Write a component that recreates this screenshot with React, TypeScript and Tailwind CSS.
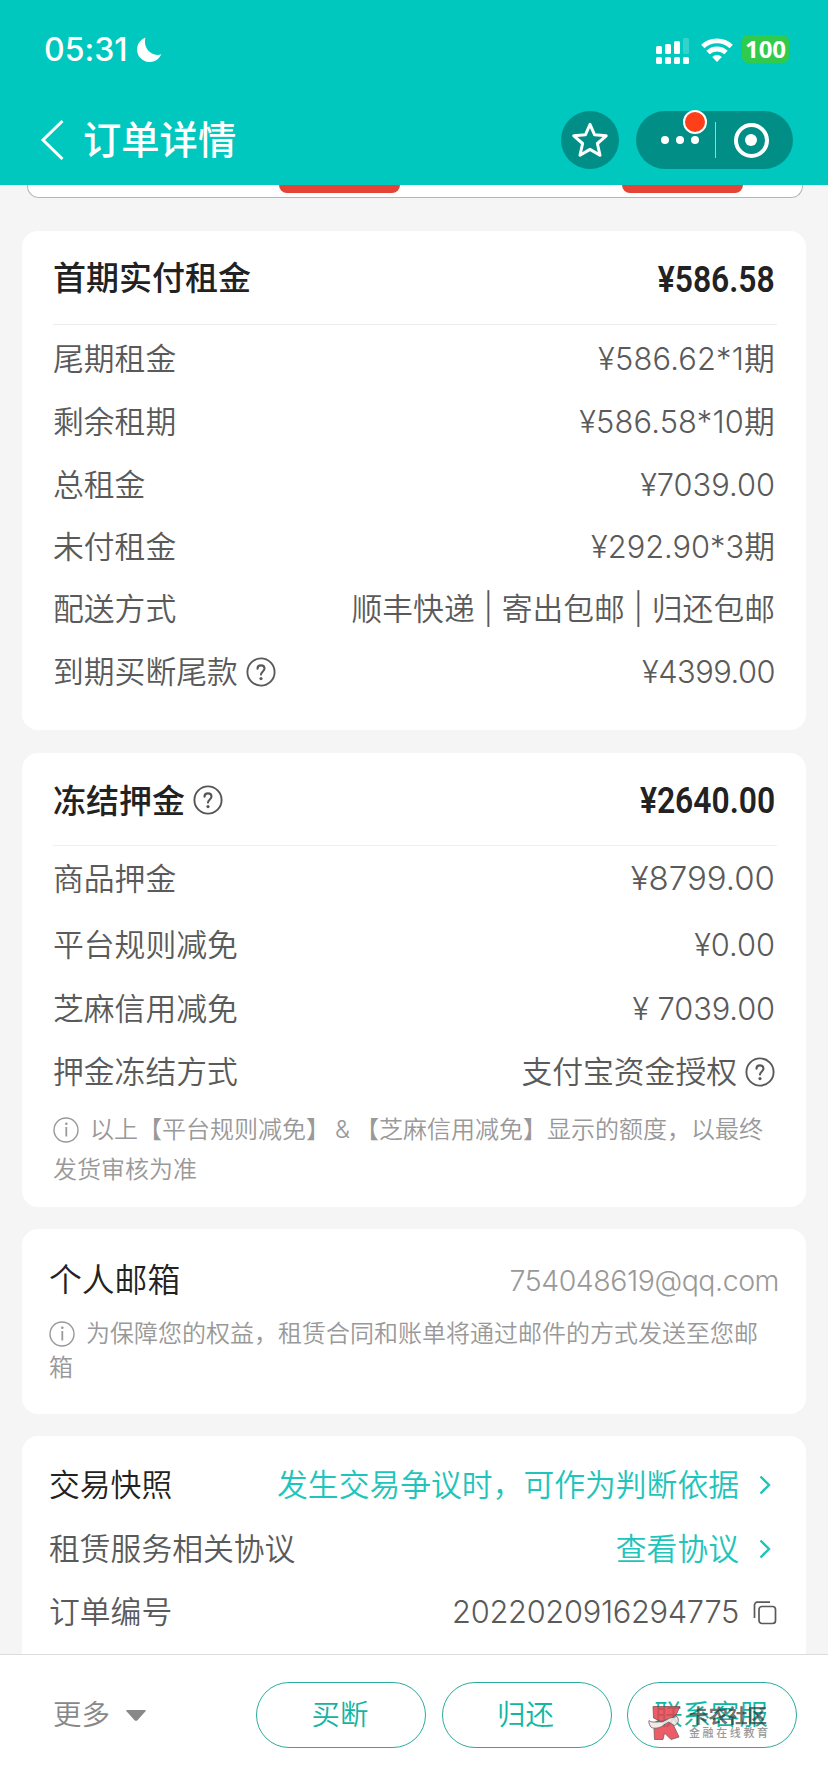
import React from 'react';
import clsx from 'clsx';

interface RowProps {
  label: React.ReactNode;
  value: React.ReactNode;
  className?: string;
  labelClassName?: string;
  valueClassName?: string;
}

function QuestionIcon({ className }: { className?: string }) {
  return (
    <svg viewBox="0 0 30 30" className={clsx('h-[30px] w-[30px] shrink-0', className)} fill="none" stroke="currentColor">
      <circle cx="15" cy="15" r="13.6" strokeWidth="1.9" />
      <path d="M11.5 11.8c0-2 1.400-3.400 3.500-3.400s3.500 1.300 3.500 3.200c0 2.700-3.500 3-3.500 6" strokeWidth="2.100" strokeLinecap="round" />
      <circle cx="15" cy="21.6" r="1.600" fill="currentColor" stroke="none" />
    </svg>
  );
}

function InfoIcon() {
  return (
    <svg viewBox="0 0 26 26" className="mr-[11px] inline-block h-[26px] w-[26px] align-[-5px]" fill="none" stroke="currentColor">
      <circle cx="13" cy="13" r="12" strokeWidth="1.400" />
      <path d="M13.300 10v9.500" strokeWidth="1.8" />
      <circle cx="13.300" cy="6.800" r="1.300" fill="currentColor" stroke="none" />
    </svg>
  );
}

function ArrowIcon() {
  return (
    <svg viewBox="0 0 12 20" className="mr-[5px] ml-[20px] h-[20px] w-[12px]" fill="none" stroke="currentColor" strokeWidth="2.400">
      <path d="M1.5 1.5 10 10l-8.500 8.500" />
    </svg>
  );
}

function CopyIcon() {
  return (
    <svg viewBox="0 0 24 24" className="ml-[14px] h-[24px] w-[24px]" fill="none" stroke="currentColor" strokeWidth="1.700">
      <rect x="6" y="5.500" width="16.500" height="17" rx="3" />
      <path d="M1.500 17V4a2.800 2.800 0 0 1 2.800-2.800H17" />
    </svg>
  );
}

function Row({ label, value, className, labelClassName, valueClassName }: RowProps) {
  return (
    <div className={clsx('flex items-center justify-between text-[30.8px] text-[#5a5a5a]', className)}>
      <div className={clsx('flex items-center', labelClassName)}>{label}</div>
      <div className={clsx('flex items-center', valueClassName)}>{value}</div>
    </div>
  );
}

function Price({ children }: { children: React.ReactNode }) {
  return (
    <span className="origin-right scale-x-[0.85] pt-[3px] font-[Roboto] text-[37.5px] font-semibold text-[#222]">
      {children}
    </span>
  );
}

function StatusBar() {
  return (
    <div className="flex h-[100px] items-center pr-[39px] pl-[44px] text-white">
      <span className="text-[32px] leading-none font-medium">05:31</span>
      <svg viewBox="0 0 26 26" className="ml-[9px] h-[26px] w-[26px]" fill="currentColor">
        <path d="M9.500 0.500A12.600 12.600 0 1 0 25.300 17.200C16 20.500 6.500 11.500 9.500 0.500Z" />
      </svg>
      <svg viewBox="0 0 34 27" className="ml-auto h-[27px] w-[34px]" fill="currentColor">
        <rect x="0" y="9" width="6" height="8" rx="1.500" />
        <rect x="9" y="7" width="6" height="10" rx="1.500" />
        <rect x="18" y="4" width="6" height="13" rx="1.500" />
        <rect x="27" y="1" width="6" height="16" rx="1.500" opacity="0.2" />
        <rect x="0" y="20" width="6" height="7" rx="1.500" />
        <rect x="9" y="20" width="6" height="7" rx="1.500" />
        <rect x="18" y="20" width="6" height="7" rx="1.500" />
        <rect x="27" y="20" width="6" height="7" rx="1.500" />
      </svg>
      <svg viewBox="0 0 32 24" className="-mt-[1px] ml-[11px] h-[24px] w-[32px]" fill="none" stroke="currentColor" strokeWidth="4.800">
        <path d="M1.800 8.600a20.500 20.500 0 0 1 28.400 0" />
        <path d="M7 14.600a13 13 0 0 1 18 0" />
        <path d="M16 24l-4.800-5a7 7 0 0 1 9.600 0Z" fill="currentColor" stroke="none" />
      </svg>
      <span className="-mt-[2px] ml-[9px] flex h-[28px] w-[47px] items-center justify-center rounded-[6px] bg-[#30cb4c] font-['Open_Sans'] text-[24px] leading-none font-bold">
        100
      </span>
    </div>
  );
}

function NavBar() {
  return (
    <div className="flex h-[80px] items-center pr-[35px] pl-[40px] text-white">
      <svg viewBox="0 0 24 40" className="h-[40px] w-[24px]" fill="none" stroke="currentColor" strokeWidth="3">
        <path d="M22.500 1 3 20l19.500 19" />
      </svg>
      <h1 className="ml-[19px] text-[38.300px] leading-none font-medium">订单详情</h1>
      <div className="ml-auto flex h-[58px] w-[58px] items-center justify-center rounded-full bg-[#008e86]">
        <svg viewBox="0 0 36 36" className="h-[36px] w-[36px]" fill="none" stroke="currentColor" strokeWidth="3" strokeLinejoin="round">
          <path d="M18 2.400l4.500 10.300 11.700 1.100-8.800 7.700 2.600 11.800L18 27.400l-10 5.900 2.600-11.800L1.800 13.800l11.700-1.100Z" />
        </svg>
      </div>
      <div className="relative ml-[17px] flex h-[58px] w-[157px] items-center rounded-full bg-[#008e86]">
        <div className="ml-[25px] flex gap-[7.500px]">
          <i className="h-[7.500px] w-[7.500px] rounded-full bg-white" />
          <i className="h-[7.500px] w-[7.500px] rounded-full bg-white" />
          <i className="h-[7.500px] w-[7.500px] rounded-full bg-white" />
        </div>
        <div className="ml-[16px] h-[36px] w-px bg-white/60" />
        <div className="ml-[18px] flex h-[35px] w-[35px] items-center justify-center rounded-full border-[4.500px] border-white">
          <i className="h-[12px] w-[12px] rounded-full bg-white" />
        </div>
        <span className="absolute -top-px left-[47px] h-[24px] w-[24px] rounded-full border-2 border-white bg-[#ff3e1a]" />
      </div>
    </div>
  );
}

function Watermark() {
  return (
    <div className="pointer-events-none absolute top-[22px] left-[20px] flex items-start">
      <svg viewBox="0 0 34 36" className="h-[36px] w-[34px]" opacity="0.85">
        <g fill="#e8414d" stroke="#6b3a3a" strokeWidth="0.800">
          <path d="M5 1.500H32L28 10 21.500 15 15 17.500 5.500 13Z" />
          <path d="M6 23.500l9-4.500 8.500-3L31 32l-8 2.500L16.500 28 15 34.500H6.500Z" />
        </g>
        <path d="M1 15.500c3 3 9 .5 13 1.500l8-4 7-1.500c2.500 3.500 1.500 7-2.500 9l-6-3.500-5.500 3.500C12 23 6.500 24 3.500 22.500 1.500 20.500.5 18 1 15.500Z" fill="#f4e4e2" stroke="#555" strokeWidth="0.900" />
      </svg>
      <div className="ml-[7px] pt-[2px] leading-none whitespace-nowrap">
        <div className="text-[19.500px] leading-[19px] font-bold text-[#333]/70">卡农社区</div>
        <div className="text-[11px] leading-[14px] font-medium tracking-[2.600px] text-[#999]">金融在线教育</div>
      </div>
    </div>
  );
}

const actions = ['买断', '归还', '联系客服'];

export default function App() {
  return (
    <div className="flex h-[1792px] w-[828px] flex-col overflow-hidden bg-[#f5f5f5] font-[Inter,'Noto_Sans_CJK_SC',sans-serif] font-[350] [font-feature-settings:'calt'_0]">
      <header className="h-[185px] shrink-0 bg-[#00c8be]">
        <StatusBar />
        <NavBar />
      </header>

      <main className="flex h-[1469px] shrink-0 flex-col overflow-hidden">
        {/* tail of the instalment card, scrolled under the header */}
        <div className="mr-[25px] ml-[27px] flex h-[13px] shrink-0 rounded-b-[12px] border border-t-0 border-[#b5b5b5] bg-white">
          <div className="ml-[251px] h-[8px] w-[121px] rounded-b-[9px] bg-[#e54335]" />
          <div className="ml-[222px] h-[8px] w-[121px] rounded-b-[9px] bg-[#e54335]" />
        </div>

        <section className="mx-[22px] mt-[33px] h-[499px] shrink-0 rounded-[16px] bg-white px-[31px]">
          <div className="-mr-[2px] flex h-[94px] items-center justify-between border-b border-[#ececec] pr-[2px]">
            <h2 className="pt-[3px] text-[33px] font-medium text-[#222]">首期实付租金</h2>
            <Price>¥586.58</Price>
          </div>
          <div className="pt-[2px]">
            <Row className="h-[64px]" label="尾期租金" value="¥586.62*1期" valueClassName="tracking-[0.2px]" />
            <Row className="h-[63px]" label="剩余租期" value="¥586.58*10期" valueClassName="tracking-[0.2px]" />
            <Row className="h-[62px]" label="总租金" value="¥7039.00" />
            <Row className="h-[62px]" label="未付租金" value="¥292.90*3期" />
            <Row className="h-[62px]" label="配送方式" value="顺丰快递 | 寄出包邮 | 归还包邮" />
            <Row
              className="h-[64px]"
              label={
                <>
                  到期买断尾款
                  <QuestionIcon className="ml-[8px]" />
                </>
              }
              value="¥4399.00"
              valueClassName="tracking-[-0.5px]"
            />
          </div>
        </section>

        <section className="mx-[22px] mt-[23px] h-[454px] shrink-0 rounded-[16px] bg-white px-[31px]">
          <div className="-mr-[2px] flex h-[93px] items-center justify-between border-b border-[#f0f0f0] pr-[2px]">
            <h2 className="flex items-center pt-[5px] text-[33px] font-medium text-[#222]">
              冻结押金
              <QuestionIcon className="-mt-[3px] ml-[8px] text-[#555]" />
            </h2>
            <Price>¥2640.00</Price>
          </div>
          <Row className="h-[66px]" label="商品押金" value="¥8799.00" valueClassName="text-[33px]" />
          <Row className="h-[67px]" label="平台规则减免" value="¥0.00" />
          <Row className="h-[61px]" label="芝麻信用减免" value="¥ 7039.00" valueClassName="tracking-[-0.1px]" />
          <Row
            className="h-[64px]"
            label="押金冻结方式"
            value={
              <>
                支付宝资金授权
                <QuestionIcon className="ml-[8px]" />
              </>
            }
          />
          <p className="mt-[6px] text-[24px] leading-[40px] whitespace-nowrap text-[#999]">
            <InfoIcon />
            以上【平台规则减免】<span className="mx-[5px]">&amp;</span>【芝麻信用减免】显示的额度，以最终
            <br />
            发货审核为准
          </p>
        </section>

        <section className="mx-[22px] mt-[22px] h-[185px] shrink-0 rounded-[16px] bg-white px-[27px] pt-[19px]">
          <Row
            className="h-[66px]"
            label="个人邮箱"
            value="754048619@qq.com"
            labelClassName="text-[32.800px] text-[#222]"
            valueClassName="text-[28.500px] tracking-[-0.45px] text-[#999]"
          />
          <p className="mt-[3px] text-[24px] leading-[34px] whitespace-nowrap text-[#999]">
            <InfoIcon />
            为保障您的权益，租赁合同和账单将通过邮件的方式发送至您邮
            <br />箱
          </p>
        </section>

        <section className="mx-[22px] mt-[22px] h-[240px] shrink-0 rounded-t-[16px] bg-white pt-[17px] pr-[30px] pl-[27px]">
          <Row
            className="h-[64px]"
            label="交易快照"
            labelClassName="text-[#222]"
            value={
              <>
                发生交易争议时，可作为判断依据
                <ArrowIcon />
              </>
            }
            valueClassName="text-[#1fc4ba]"
          />
          <Row
            className="h-[64px]"
            label="租赁服务相关协议"
            value={
              <>
                查看协议
                <ArrowIcon />
              </>
            }
            valueClassName="text-[#1fc4ba]"
          />
          <Row
            className="-mr-[1px] h-[63px]"
            label="订单编号"
            value={
              <>
                2022020916294775
                <CopyIcon />
              </>
            }
            valueClassName="tracking-[-0.3px]"
          />
        </section>
      </main>

      <footer className="flex h-[138px] shrink-0 items-start border-t border-[#dcdcdc] bg-white pt-[27px] pr-[31px] pl-[53px]">
        <div className="flex h-[66px] items-center text-[28.500px] text-[#888]">
          更多
          <svg viewBox="0 0 20 11" className="ml-[16px] h-[11px] w-[20px]" fill="#888">
            <path d="M1 0h18q1.500 0 .5 1.200l-8 9q-1.500 1.300-3 0l-8-9Q-.5 0 1 0Z" />
          </svg>
        </div>
        <div className="ml-auto flex gap-[15.500px]">
          {actions.map((text) => (
            <div
              key={text}
              className="relative flex h-[66px] w-[170px] items-center justify-center rounded-full border border-[#2aab9c] pr-[2px] text-[28.400px] text-[#12b5a2]"
            >
              {text}
              {text === '联系客服' && <Watermark />}
            </div>
          ))}
        </div>
      </footer>
    </div>
  );
}
